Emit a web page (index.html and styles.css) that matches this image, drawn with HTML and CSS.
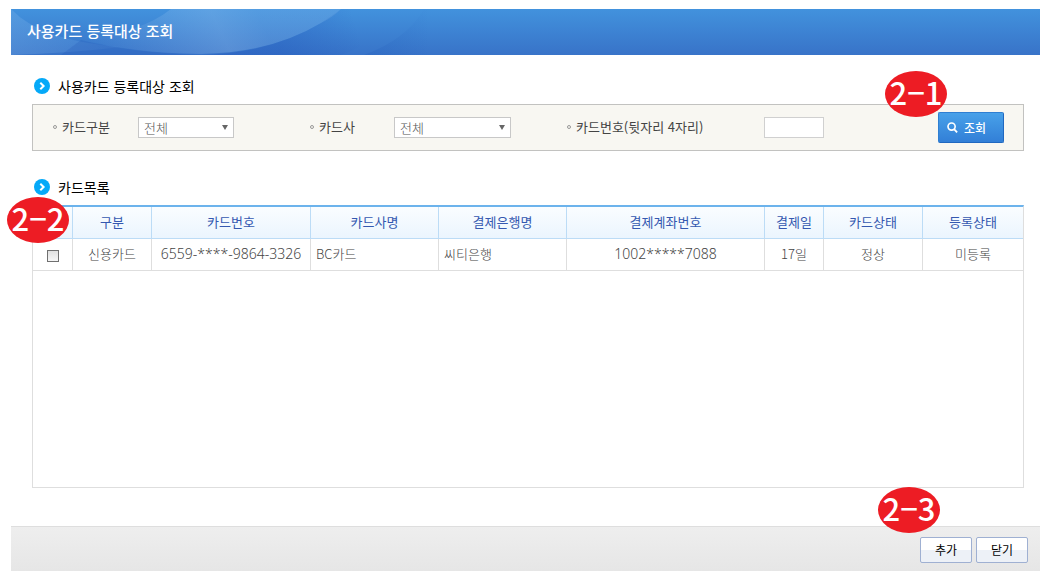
FILE: index.html
```html
<!DOCTYPE html>
<html lang="ko">
<head>
<meta charset="utf-8">
<title>사용카드 등록대상 조회</title>
<link rel="stylesheet" href="styles.css">
</head>
<body>
<div class="popup">
  <header class="popup-header">
    <svg class="popup-swoosh" viewBox="0 0 420 46" preserveAspectRatio="none" aria-hidden="true">
      <defs>
        <linearGradient id="glow" gradientUnits="userSpaceOnUse" x1="90" y1="60" x2="240" y2="-10">
          <stop offset="0" stop-color="#a8cdf2" stop-opacity="0"/>
          <stop offset="0.75" stop-color="#a8cdf2" stop-opacity="0.28"/>
          <stop offset="1" stop-color="#a8cdf2" stop-opacity="0.18"/>
        </linearGradient>
        <linearGradient id="deep" gradientUnits="userSpaceOnUse" x1="190" y1="46" x2="340" y2="0">
          <stop offset="0" stop-color="#1d50b8" stop-opacity="0.3"/>
          <stop offset="0.5" stop-color="#1d50b8" stop-opacity="0.3"/>
          <stop offset="1" stop-color="#1d50b8" stop-opacity="0"/>
        </linearGradient>
        <linearGradient id="left" gradientUnits="userSpaceOnUse" x1="0" y1="0" x2="150" y2="0">
          <stop offset="0" stop-color="#7fb5ea" stop-opacity="0.3"/>
          <stop offset="1" stop-color="#7fb5ea" stop-opacity="0"/>
        </linearGradient>
        <linearGradient id="edge" gradientUnits="userSpaceOnUse" x1="345" y1="0" x2="418" y2="0">
          <stop offset="0" stop-color="#1d58b8" stop-opacity="0.25"/>
          <stop offset="1" stop-color="#1d58b8" stop-opacity="0"/>
        </linearGradient>
      </defs>
      <path d="M0 0 Q30 32 110 38 Q60 44 0 46Z" fill="url(#left)"/>
      <path d="M70 30 Q130 24 160 0 L330 0 Q322 8 310 14 Q260 44 190 45 Q120 44 70 30Z" fill="url(#glow)"/>
      <path d="M190 46 Q260 44 310 14 L330 0 L390 0 Q370 32 330 46Z" fill="url(#deep)"/>
      <path d="M70 31 Q120 44 190 46 L50 46Z" fill="#2458b8" opacity="0.25"/>
      <path d="M353 46 Q396 30 413 0 L420 0 L420 46Z" fill="url(#edge)"/>
    </svg>
    <h1 class="popup-title">사용카드 등록대상 조회</h1>
  </header>

  <main class="content">
    <section>
      <h2 class="section-title">
        <svg class="section-icon" viewBox="0 0 16 16" aria-hidden="true"><circle cx="8" cy="8" r="8" fill="#05a9f8"/><path d="M6.3 4.8 9.6 8 6.3 11.2" fill="none" stroke="#fff" stroke-width="2"/></svg>
        사용카드 등록대상 조회
      </h2>
      <form class="search">
        <label class="field-label" for="card-type">카드구분</label>
        <span class="select-wrap select-short"><select id="card-type" class="select"><option>전체</option></select></span>
        <label class="field-label" for="card-company">카드사</label>
        <span class="select-wrap select-long"><select id="card-company" class="select"><option>전체</option></select></span>
        <label class="field-label" for="card-number">카드번호(뒷자리 4자리)</label>
        <input id="card-number" class="text-input" type="text" maxlength="4">
        <button class="search-button" type="button">
          <svg class="search-icon" viewBox="0 0 12 12" aria-hidden="true"><circle cx="5" cy="5" r="3.9" fill="none" stroke="#fff" stroke-width="1.8"/><path d="M7.7 7.7 11 11.2" stroke="#fff" stroke-width="2"/></svg>
          조회
        </button>
        <span class="marker marker-search">2−1</span>
      </form>
    </section>

    <section class="list-section">
      <h2 class="section-title">
        <svg class="section-icon" viewBox="0 0 16 16" aria-hidden="true"><circle cx="8" cy="8" r="8" fill="#05a9f8"/><path d="M6.3 4.8 9.6 8 6.3 11.2" fill="none" stroke="#fff" stroke-width="2"/></svg>
        카드목록
      </h2>
      <div class="grid">
        <table class="card-table">
          <colgroup>
            <col class="col-check"><col class="col-type"><col class="col-number"><col class="col-bank"><col class="col-bank"><col class="col-account"><col class="col-day"><col class="col-state"><col class="col-last">
          </colgroup>
          <thead>
            <tr><th></th><th>구분</th><th>카드번호</th><th>카드사명</th><th>결제은행명</th><th>결제계좌번호</th><th>결제일</th><th>카드상태</th><th>등록상태</th></tr>
          </thead>
          <tbody>
            <tr>
              <td><input class="check" type="checkbox" aria-label="카드 선택"></td>
              <td>신용카드</td>
              <td class="number">6559-****-9864-3326</td>
              <td class="name">BC카드</td>
              <td class="name">씨티은행</td>
              <td class="number">1002*****7088</td>
              <td>17일</td>
              <td>정상</td>
              <td>미등록</td>
            </tr>
          </tbody>
        </table>
        <span class="marker marker-list">2−2</span>
      </div>
    </section>
  </main>

  <footer class="popup-footer">
    <button class="footer-button" type="button">추가</button>
    <button class="footer-button" type="button">닫기</button>
    <span class="marker marker-add">2−3</span>
  </footer>
</div>
</body>
</html>
```

FILE: styles.css
```css
*,
*::before,
*::after {
  box-sizing: border-box;
}

body {
  margin: 0;
  padding: 9px 7px 8px 11px;
  background: #fff;
  color: #000;
  font-family: "Noto Sans CJK KR", sans-serif;
  font-size: 13px;
  line-height: 20px;
}

button,
input,
select {
  font-family: inherit;
}

.popup-header {
  position: relative;
  display: flex;
  align-items: center;
  height: 46px;
  padding: 0 16px;
  background: linear-gradient(#4292dd, #3873c8);
}

.popup-swoosh {
  position: absolute;
  top: 0;
  left: 0;
  width: 420px;
  height: 46px;
}

.popup-title {
  position: relative;
  margin: 0;
  padding-bottom: 2px;
  color: #fff;
  font-size: 15px;
  font-weight: 500;
}

.content {
  padding: 21px 16px 38px 21px;
}

.section-title {
  display: flex;
  align-items: center;
  gap: 8px;
  margin: 0 0 8px;
  padding-left: 2px;
  font-size: 14px;
  font-weight: 400;
}

.section-icon {
  width: 16px;
  height: 16px;
}

.search {
  position: relative;
  display: grid;
  grid-template-columns: 85px 172px 84px 173px 197px 1fr auto;
  align-items: center;
  height: 47px;
  padding: 0 19px 0 20px;
  background: #f8f7f2;
  border: 1px solid #c2c2c0;
}

.field-label {
  display: flex;
  align-items: center;
  gap: 5px;
  padding-bottom: 2px;
  color: #444;
  font-weight: 400;
}

.field-label::before {
  content: "";
  width: 4px;
  height: 4px;
  border: 1px solid #999;
  border-radius: 50%;
}

.select-wrap {
  position: relative;
  display: flex;
}

.select-wrap::after {
  content: "";
  position: absolute;
  top: 8px;
  right: 6px;
  border: 3px solid transparent;
  border-top: 5px solid #666;
  border-bottom: 0;
  pointer-events: none;
}

.select-short {
  width: 96px;
}

.select-long {
  width: 117px;
}

.select {
  appearance: none;
  width: 100%;
  height: 21px;
  padding: 0 5px;
  background: #fff;
  border: 1px solid #c8c8c8;
  border-radius: 0;
  color: #555;
  font-size: 13px;
  font-weight: 300;
  line-height: 19px;
}

.text-input {
  width: 60px;
  height: 21px;
  padding: 0 4px;
  background: #fff;
  border: 1px solid #d0d0d0;
}

.search-button {
  display: flex;
  align-items: center;
  gap: 6px;
  width: 66px;
  height: 31px;
  padding: 0 8px;
  background: linear-gradient(#48a1e9, #327fd7);
  border: 1px solid #2f7fd2;
  border-right-color: #2068c0;
  border-bottom-color: #2068c0;
  border-radius: 2px;
  color: #fff;
  font-size: 12px;
  font-weight: 500;
  white-space: nowrap;
}

.search-icon {
  width: 11px;
  height: 11px;
}

.list-section {
  margin-top: 26px;
}

.grid {
  position: relative;
  min-height: 283px;
  border: 1px solid #dedede;
  border-top: 2px solid #6cb3ec;
}

.card-table {
  width: 100%;
  table-layout: fixed;
  border-collapse: separate;
  border-spacing: 0;
}

.col-check {
  width: 40px;
}

.col-type {
  width: 79px;
}

.col-number {
  width: 159px;
}

.col-bank {
  width: 128px;
}

.col-account {
  width: 198px;
}

.col-day {
  width: 59px;
}

.col-state {
  width: 99px;
}

.col-last {
  width: 100px;
}

.card-table th,
.card-table td {
  height: 32px;
  padding: 0 0 2px;
  border-right: 1px solid #dedede;
  border-bottom: 1px solid #dedede;
  color: #444;
  font-weight: 300;
  text-align: center;
}

.card-table th {
  background: linear-gradient(#fafdff, #ebf5fe);
  border-color: #bcdcf6;
  color: #3458b0;
  font-weight: 400;
}

.card-table th:last-child,
.card-table td:last-child {
  border-right: 0;
}

.card-table .number {
  font-family: "Noto Sans", "Noto Sans CJK KR", sans-serif;
  font-size: 14px;
}

.card-table .name {
  padding-left: 5px;
  text-align: left;
}

.check {
  appearance: none;
  display: block;
  width: 12px;
  height: 12px;
  margin: 4px auto 0;
  background: linear-gradient(#e0e0e0, #f6f6f6);
  border: 1px solid #707070;
}

.check:checked {
  background: #4292dd;
}

.popup-footer {
  position: relative;
  display: flex;
  align-items: center;
  justify-content: flex-end;
  gap: 4px;
  height: 45px;
  padding: 2px 12px 0;
  background: linear-gradient(#eee, #e6e6e6);
  border-top: 1px solid #dedede;
}

.footer-button {
  width: 52px;
  height: 26px;
  padding: 0 0 1px;
  background: linear-gradient(#fff 50%, #edf1f7 50%);
  border: 1px solid #9fb0d2;
  border-radius: 2px;
  color: #000;
  font-size: 12px;
  font-weight: 400;
}

.marker {
  position: absolute;
  width: 62px;
  height: 46px;
  background: #ed1c24;
  border-radius: 50%;
  color: #fff;
  font-size: 31px;
  font-weight: 500;
  line-height: 42px;
  text-align: center;
  white-space: nowrap;
}

.marker-search {
  top: -34px;
  right: 76px;
}

.marker-list {
  top: -10px;
  left: -26px;
}

.marker-add {
  top: -40px;
  right: 100px;
}
```
